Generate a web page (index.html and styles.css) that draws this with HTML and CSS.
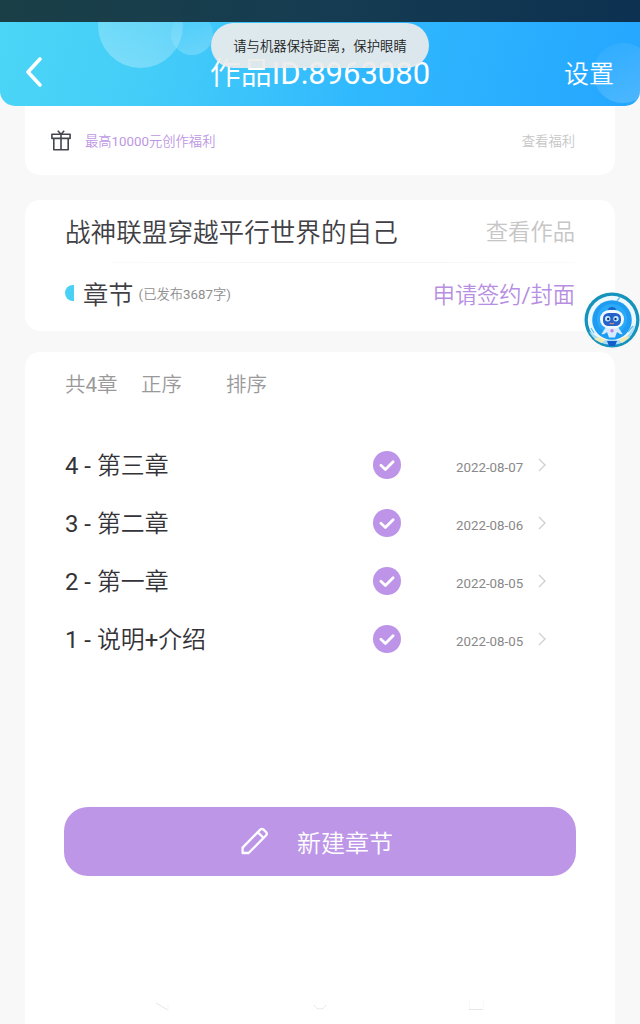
FILE: index.html
```html
<!DOCTYPE html>
<html lang="zh-CN">
<head>
  <meta charset="UTF-8" />
  <meta name="viewport" content="width=device-width, initial-scale=1.0"/>
  <title>作品ID:8963080</title>
  <link rel="stylesheet" href="styles.css">
</head>
<body>
  <header class="header">
    <span class="bubble bubble-big"></span>
    <span class="bubble bubble-small"></span>
    <span class="bubble bubble-right"></span>
    <div class="status-bar"></div>
    <div class="nav">
      <svg class="back" width="20" height="32" viewBox="0 0 20 32" fill="none" stroke="#fff" stroke-width="3.6" stroke-linecap="round" stroke-linejoin="round">
        <path d="M16 3 L4 16 L16 29"/>
      </svg>
      <h1 class="title">作品ID:8963080</h1>
      <a class="settings">设置</a>
    </div>
    <div class="toast">请与机器保持距离，保护眼睛</div>
  </header>

  <main>
    <section class="card welfare">
      <svg class="gift" width="20" height="21" viewBox="0 0 20 21" fill="none" stroke="#45454f" stroke-width="1.6" stroke-linejoin="round">
        <path d="M.9 4.2h18.2v4.2H.9zM2.8 8.4h14.4v11.3H2.8zM10 4.2v15.5M6.8.8 10 4.2 13.2.8"/>
      </svg>
      <span class="welfare-text">最高10000元创作福利</span>
      <a class="welfare-link">查看福利</a>
    </section>

    <section class="card book">
      <div class="book-row">
        <h2 class="book-name">战神联盟穿越平行世界的自己</h2>
        <a class="book-link">查看作品</a>
      </div>
      <div class="divider"></div>
      <div class="book-row chapter-row">
        <span class="half-dot"></span>
        <h3 class="chapter-title">章节</h3>
        <span class="word-count">(已发布3687字)</span>
        <a class="sign-link">申请签约/封面</a>
      </div>
    </section>

    <section class="card chapters">
      <div class="filters">
        <span class="total">共4章</span>
        <span class="order">正序</span>
        <span>排序</span>
      </div>

      <ul class="list">
        <li class="item">
          <span class="name">4 - 第三章</span>
          <svg class="check" viewBox="0 0 28 28"><circle cx="14" cy="14" r="14"/><path d="M7.9 14.2 12.4 18.4 20.1 10.7"/></svg>
          <span class="date">2022-08-07</span>
          <svg class="arrow" viewBox="0 0 8 14"><path d="M1 1 7 7 1 13"/></svg>
        </li>
        <li class="item">
          <span class="name">3 - 第二章</span>
          <svg class="check" viewBox="0 0 28 28"><circle cx="14" cy="14" r="14"/><path d="M7.9 14.2 12.4 18.4 20.1 10.7"/></svg>
          <span class="date">2022-08-06</span>
          <svg class="arrow" viewBox="0 0 8 14"><path d="M1 1 7 7 1 13"/></svg>
        </li>
        <li class="item">
          <span class="name">2 - 第一章</span>
          <svg class="check" viewBox="0 0 28 28"><circle cx="14" cy="14" r="14"/><path d="M7.9 14.2 12.4 18.4 20.1 10.7"/></svg>
          <span class="date">2022-08-05</span>
          <svg class="arrow" viewBox="0 0 8 14"><path d="M1 1 7 7 1 13"/></svg>
        </li>
        <li class="item">
          <span class="name">1 - 说明+介绍</span>
          <svg class="check" viewBox="0 0 28 28"><circle cx="14" cy="14" r="14"/><path d="M7.9 14.2 12.4 18.4 20.1 10.7"/></svg>
          <span class="date">2022-08-05</span>
          <svg class="arrow" viewBox="0 0 8 14"><path d="M1 1 7 7 1 13"/></svg>
        </li>
      </ul>

      <button class="new-btn">
        <svg width="28" height="28" viewBox="0 0 28 28" fill="none" stroke="#fff" stroke-width="2.3" stroke-linejoin="round">
          <path d="M1.6 26V20.6L19.3 2.6Q21 1.2 22.6 2.6L25.2 5.3Q26.4 6.7 25.2 8.3L7.6 26ZM16.8 5.2 22.3 10.8"/>
        </svg>
        <span>新建章节</span>
      </button>

      <svg class="sys-nav" width="330" height="16" viewBox="0 0 330 16" fill="none" stroke-width="1">
        <path d="M2 3 14 10" stroke="#e6e6e6"/>
        <path d="M14 10V3" stroke="#f6f6f6"/>
        <path d="M160 5a6.5 6.5 0 0 0 12 0" stroke="#e9e9e9"/>
        <path d="M315.5 1v8M329.5 1v8" stroke="#f8f8f8"/>
        <path d="M315 9.5h14" stroke="#e6e6e6"/>
      </svg>
    </section>
  </main>

  <!-- floating assistant -->
  <svg class="robot" width="56" height="56" viewBox="0 0 56 56">
    <circle cx="28" cy="28" r="27.5" fill="#1593bd"/>
    <circle cx="28" cy="28" r="24.2" fill="#eef9ff"/>
    <path d="M5 39Q12 44 18 48L38 48Q46 43 51 32Q50 44 40 50Q28 56 15 50Q8 46 5 39Z" fill="#a9dcf7"/>
    <circle cx="28" cy="28" r="19.8" fill="#1e9cf2"/>
    <circle cx="28" cy="27" r="15" fill="#2aa9f8"/>
    <path d="M33 9 36 5M49 34 44 40M7 36 10 41" stroke="#62bdee" stroke-width="1.3"/>
    <path d="M10 47Q15 43 21 48L18 51ZM35 48Q41 43 46 45L38 51Z" fill="#f3e9b2"/>
    <path d="M23 49H33L31 54H25Z" fill="#125fcb"/>
    <path d="M28 18V15M24.5 18 26 16.5H30L31.5 18" fill="none" stroke="#1763c6" stroke-width="2"/>
    <path d="M22 35 17.500 42Q20 43 23 40L25 45.500H31L33 40Q37 43 38.500 42L34 35Z" fill="#d9ebff"/>
    <rect x="16" y="18" width="24" height="18.5" rx="9" fill="#f2f8ff"/>
    <rect x="19" y="21" width="18" height="13" rx="5.5" fill="#2462ca"/>
    <circle cx="23.7" cy="26.8" r="2.7" fill="#c5eaff"/>
    <circle cx="32" cy="26.8" r="2.7" fill="#c5eaff"/>
    <circle cx="24.2" cy="27" r="1.2" fill="#18346e"/>
    <circle cx="31.5" cy="27" r="1.2" fill="#18346e"/>
    <path d="M25.5 31Q28 32.5 30 31" fill="none" stroke="#dd8a7c" stroke-width="1.2"/>
    <circle cx="28" cy="38.8" r="1.7" fill="#c77fe0"/>
  </svg>
</body>
</html>
```
FILE: styles.css
```css
* {
  box-sizing: border-box;
}

body {
  font-family: Roboto, "Noto Sans CJK SC DemiLight", "Noto Sans CJK SC", sans-serif;
  font-weight: 400;
  margin: 0;
  width: 640px;
  height: 1024px;
  overflow: hidden;
  background: #f8f8f8;
  display: flex;
  flex-direction: column;
}

h1, h2, h3, ul {
  margin: 0;
  padding: 0;
  font-weight: inherit;
  list-style: none;
}

svg {
  display: block;
  flex: none;
}

.header {
  position: relative;
  flex: none;
  height: 106px;
  border-radius: 0 0 15px 15px;
  background: linear-gradient(105deg, #4bd6f6 0%, #44cdf8 25%, #30b8fe 58%, #24a6ff 100%);
  overflow: hidden;
  z-index: 2;
}

.status-bar {
  position: relative;
  height: 22px;
  background: linear-gradient(90deg, rgba(24, 58, 65, 0.97), rgba(20, 56, 76, 0.97) 50%, rgba(12, 45, 75, 0.97));
}

.nav {
  position: relative;
  display: flex;
  justify-content: space-between;
  align-items: center;
  height: 84px;
  padding: 16px 26px 0 24px;
  color: #fff;
}

.title {
  font-size: 31px;
  line-height: 40px;
  padding: 4px 0 0 32px;
}

.settings {
  font-size: 25px;
}

/* light circles on the header gradient */
.bubble {
  position: absolute;
  border-radius: 50%;
}

.bubble-big {
  left: 98px;
  top: -17px;
  width: 85px;
  height: 85px;
  background: linear-gradient(200deg, rgba(255, 255, 255, 0.1), rgba(255, 255, 255, 0.3));
}

.bubble-small {
  left: 171px;
  top: 13px;
  width: 42px;
  height: 42px;
  background: linear-gradient(160deg, rgba(255, 255, 255, 0.02), rgba(255, 255, 255, 0.24));
}

.bubble-right {
  left: 593px;
  top: 43px;
  width: 60px;
  height: 60px;
  background: linear-gradient(150deg, rgba(255, 255, 255, 0.03), rgba(255, 255, 255, 0.2));
}

.toast {
  position: absolute;
  left: 211px;
  top: 23px;
  width: 218px;
  height: 45px;
  border-radius: 23px;
  background: rgba(236, 236, 236, 0.92);
  color: #222;
  font-size: 13.35px;
  line-height: 47px;
  text-align: center;
  white-space: nowrap;
}

main {
  flex: 1;
  display: flex;
  flex-direction: column;
  padding: 0 25px;
}

.card {
  background: #fff;
  border-radius: 15px;
}

.welfare {
  display: flex;
  align-items: center;
  height: 69px;
  padding: 0 40px 0 26px;
  font-size: 13.3px;
  border-radius: 0 0 15px 15px;
}

.welfare-text {
  margin-left: 14px;
  color: #bd97e3;
}

.welfare-link {
  margin-left: auto;
  color: #c6c6c6;
}

.book {
  height: 131px;
  margin-top: 25px;
  padding: 0 40px;
}

.book-row {
  display: flex;
  align-items: center;
  height: 62px;
}

.book-name {
  padding-bottom: 2px;
  font-size: 25.6px;
  color: #3f3f45;
}

.book-link {
  margin-left: auto;
  padding-bottom: 2px;
  font-size: 22.3px;
  color: #c6c6c6;
}

.divider {
  height: 1px;
  margin-left: 46px;
  background: linear-gradient(90deg, #fafafa, #f4f4f4, #fafafa);
}

.half-dot {
  width: 9px;
  height: 16px;
  margin-bottom: 2px;
  border-radius: 9px 0 0 9px;
  background: #49d0f4;
}

.chapter-title {
  margin-left: 9px;
  padding-bottom: 3px;
  font-size: 25.3px;
  color: #3f3f45;
}

.word-count {
  margin-left: 5px;
  padding-bottom: 2px;
  font-size: 13.3px;
  color: #8f8f8f;
}

.sign-link {
  margin-left: auto;
  padding-bottom: 3px;
  font-size: 22.2px;
  color: #b78ee2;
}

.chapters {
  flex: 1;
  margin-top: 21px;
  padding: 0 39px;
  border-radius: 15px 15px 0 0;
}

.filters {
  display: flex;
  align-items: center;
  height: 64px;
  padding: 0 0 3px 1px;
  font-size: 20.5px;
  color: #999;
}

.total {
  width: 76px;
}

.order {
  width: 85px;
}

.list {
  margin-top: 20px;
}

.item {
  display: flex;
  align-items: center;
  height: 58px;
  padding-left: 1px;
}

.name {
  width: 308px;
  padding-bottom: 3px;
  font-size: 23.9px;
  color: #333338;
}

.check {
  width: 28px;
  height: 28px;
}

.check circle {
  fill: #bd94e8;
}

.check path {
  fill: none;
  stroke: #fff;
  stroke-width: 2.8;
  stroke-linecap: round;
  stroke-linejoin: round;
}

.date {
  width: 82px;
  margin-left: 55px;
  padding-top: 5px;
  font-size: 13.3px;
  color: #888;
}

.arrow {
  width: 8px;
  height: 14px;
  fill: none;
  stroke: #cfcfcf;
  stroke-width: 1.3;
}

.new-btn {
  display: flex;
  align-items: center;
  width: 512px;
  height: 69px;
  margin-top: 139px;
  padding: 0 0 1px 177px;
  gap: 28px;
  border: none;
  border-radius: 24px;
  background: #be96e8;
  color: #fff;
  font-family: inherit;
  font-weight: inherit;
  font-size: 24px;
}

.sys-nav {
  margin: 124px 0 0 90px;
}

.robot {
  position: absolute;
  left: 584px;
  top: 292px;
  z-index: 3;
}
```
